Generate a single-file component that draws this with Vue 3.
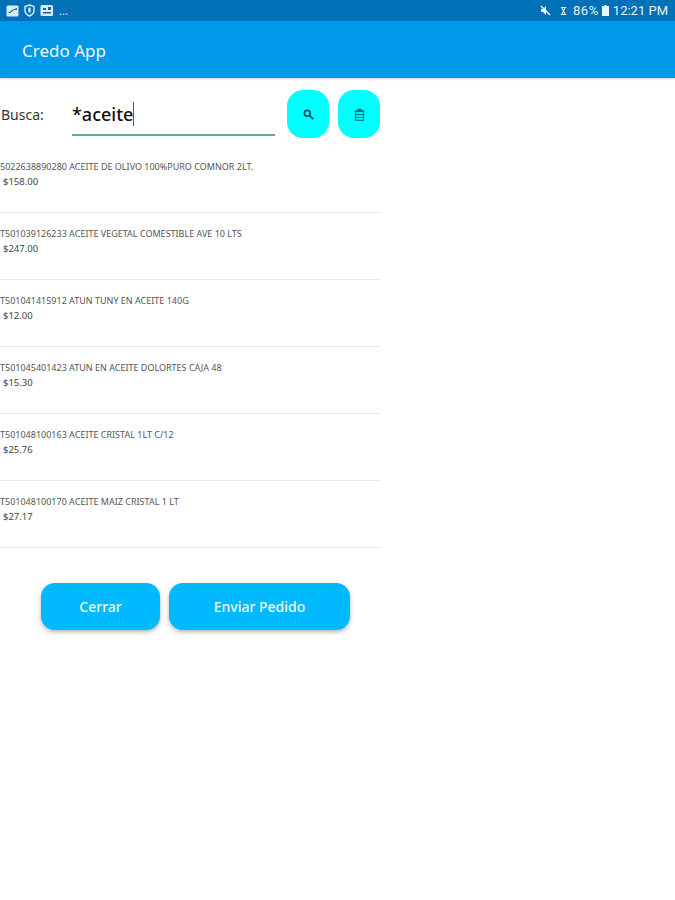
<template>
  <div class="page">
    <div class="status-bar">
      <div class="status-left">
        <svg width="13" height="12" viewBox="0 0 13 12"><rect x="0.5" y="0.5" width="12" height="11" rx="1.5" fill="#dceaf4"/><path d="M2 8l4-3 5-2v2H8L4 8z" fill="#0a6aa8"/></svg>
        <svg width="11" height="13" viewBox="0 0 11 13"><path d="M5.5 1l4.5 1.6v4c0 2.6-2 4.4-4.500 5.4C3 11 1 9.200 1 6.600v-4z" fill="none" stroke="#dceaf4" stroke-width="1.400"/><rect x="4.300" y="3.500" width="2.400" height="5" rx="1.200" fill="#dceaf4"/></svg>
        <svg width="14" height="13" viewBox="0 0 14 13"><rect x="0.500" y="1" width="12.500" height="11" rx="1.500" fill="#dceaf4"/><path d="M3 4h3v2H3zM8 3h3v3H8zM3 8h8v1.500H3z" fill="#0a6aa8"/></svg>
        <span class="dots">...</span>
      </div>
      <div class="status-right">
        <svg width="11" height="11" viewBox="0 0 11 11"><path d="M1 4h2l3-3v9L3 7H1z" fill="#eef5fa"/><path d="M1 1l9 9" stroke="#eef5fa" stroke-width="1.400"/></svg>
        <svg class="alarm" width="7" height="10" viewBox="0 0 8 10"><path d="M1 1h6M1 9h6M2 1l4 8M6 1L2 9" stroke="#dceaf4" stroke-width="1.200" fill="none"/></svg>
        <span class="pct">86%</span>
        <svg class="battery" width="7" height="11" viewBox="0 0 7 11"><path d="M2.500 0h2v1H7v10H0V1h2.500z" fill="#eef5fa"/></svg>
        <span class="clock">12:21 PM</span>
      </div>
    </div>

    <header class="app-bar">Credo App</header>

    <main class="content">
      <div class="search-row">
        <span class="search-label">Busca:</span>
        <div class="search-input">*aceite<span class="caret"></span></div>
        <button class="icon-btn search-btn" title="Buscar">
          <svg width="11" height="11" viewBox="0 0 12 12">
            <circle cx="4.700" cy="4.700" r="3.200" fill="none" stroke="#0b4a5e" stroke-width="1.700"/>
            <path d="M7.200 7.200l3.800 3.800" stroke="#0b4a5e" stroke-width="2"/>
          </svg>
        </button>
        <button class="icon-btn" title="Borrar">
          <svg width="11" height="13" viewBox="0 0 11 13">
            <path d="M3.500 1.500h4M0.800 2.800h9.400" stroke="#0a7680" stroke-width="1.300" fill="none"/>
            <rect x="1.500" y="3.500" width="8" height="8.800" fill="none" stroke="#0a7680" stroke-width="1.200"/>
            <path d="M1.500 6.500h8M1.500 9.300h8" stroke="#0a7680" stroke-width="1"/>
          </svg>
        </button>
      </div>

      <ul class="product-list">
        <li v-for="item in products" :key="item.code" class="product">
          <div class="product-name">{{ item.code }} {{ item.name }}</div>
          <div class="product-price">{{ item.price }}</div>
        </li>
      </ul>

      <div class="actions">
        <button class="action-btn close-btn">Cerrar</button>
        <button class="action-btn send-btn">Enviar Pedido</button>
      </div>
    </main>
  </div>
</template>

<script setup>
const products = [
  { code: '5022638890280', name: 'ACEITE DE OLIVO 100%PURO COMNOR 2LT.', price: '$158.00' },
  { code: 'T501039126233', name: 'ACEITE VEGETAL COMESTIBLE AVE 10 LTS', price: '$247.00' },
  { code: 'T501041415912', name: 'ATUN TUNY EN ACEITE 140G', price: '$12.00' },
  { code: 'T501045401423', name: 'ATUN EN ACEITE DOLORTES CAJA 48', price: '$15.30' },
  { code: 'T501048100163', name: 'ACEITE CRISTAL 1LT C/12', price: '$25.76' },
  { code: 'T501048100170', name: 'ACEITE MAIZ CRISTAL 1 LT', price: '$27.17' }
]
</script>

<style>
html, body {
  background: #fff;
}
</style>

<style scoped>
.page {
  width: 675px;
  height: 900px;
  overflow: hidden;
  background: #fff;
  font-family: "Noto Sans", "Open Sans", sans-serif;
}

.status-bar {
  height: 21px;
  display: flex;
  align-items: center;
  justify-content: space-between;
  padding: 0 7px 0 6px;
  background: #0071b6;
  color: #e6f1f8;
}

.status-left,
.status-right {
  display: flex;
  align-items: center;
}

.status-left {
  gap: 5px;
}

.dots {
  font-size: 11px;
  margin-top: -1px;
}

.status-right {
  font-size: 13px;
  font-family: Roboto, sans-serif;
}

.alarm {
  margin-left: 9px;
}

.pct {
  margin-left: 6px;
  letter-spacing: 0.6px;
}

.battery {
  margin-left: 3px;
}

.clock {
  margin-left: 4px;
}

.app-bar {
  height: 57px;
  padding: 1px 22px 0;
  box-sizing: border-box;
  display: flex;
  align-items: center;
  font-size: 17px;
  color: #f2f9fe;
  background: #0099e9;
  box-shadow: 0 1px 2px rgba(0, 0, 0, 0.18);
}

.content {
  width: 380px;
}

.search-row {
  display: flex;
  align-items: center;
  height: 48px;
  margin-top: 12px;
}

.search-label {
  width: 72px;
  padding-left: 1px;
  box-sizing: border-box;
  font-size: 14px;
  color: #333;
}

.search-input {
  width: 203px;
  height: 38px;
  box-sizing: border-box;
  margin-top: 5px;
  display: flex;
  align-items: center;
  padding-bottom: 3px;
  border-bottom: 2px solid #6aa99a;
  font-size: 18px;
  font-weight: 500;
  color: #111;
}

.caret {
  width: 1px;
  height: 24px;
  margin-left: 0;
  background: #1d7a6c;
}

.icon-btn {
  width: 42px;
  height: 48px;
  padding: 0;
  margin-left: 9px;
  display: flex;
  align-items: center;
  justify-content: center;
  border: none;
  border-radius: 16px;
  background: #00ffff;
}

.search-btn {
  margin-left: 12px;
}

.product-list {
  list-style: none;
  margin: 8px 0 0;
  padding: 0;
}

.product {
  height: 67px;
  box-sizing: border-box;
  padding-top: 15px;
  border-bottom: 1px solid #e8e8e8;
}

.product-name {
  font-size: 9px;
  line-height: 12px;
  color: #555;
  white-space: nowrap;
}

.product-price {
  margin-top: 2px;
  padding-left: 3px;
  font-size: 9.500px;
  line-height: 14px;
  color: #444;
}

.actions {
  display: flex;
  gap: 9px;
  margin: 35px 0 0 41px;
}

.action-btn {
  height: 47px;
  border: none;
  border-radius: 14px;
  background: #00b9ff;
  color: #eef9ff;
  font-family: "Noto Sans", sans-serif;
  font-size: 14px;
  font-weight: 500;
  box-shadow: 0 2px 4px rgba(0, 0, 0, 0.3);
}

.close-btn {
  width: 119px;
}

.send-btn {
  width: 181px;
}
</style>
